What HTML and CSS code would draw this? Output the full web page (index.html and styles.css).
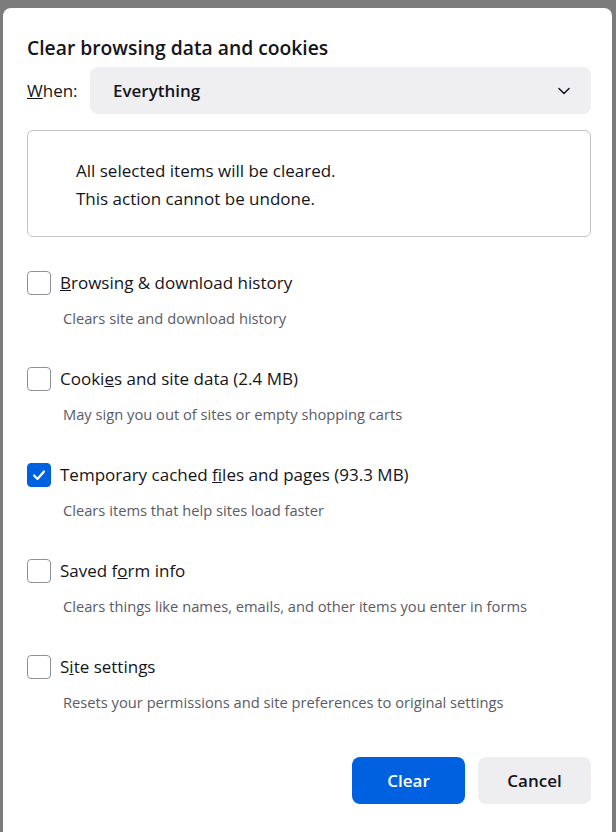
FILE: index.html
```html
<!DOCTYPE html>
<html lang="en">
<head>
  <meta charset="UTF-8" />
  <title>Clear browsing data and cookies</title>
  <link rel="stylesheet" href="styles.css">
</head>
<body>
  <div class="dialog">
    <h1 class="title">Clear browsing data and cookies</h1>

    <div class="when-row">
      <span class="when-label"><u>W</u>hen:</span>
      <div class="select">
        <span>Everything</span>
        <svg class="chevron" width="16" height="16" viewBox="0 0 16 16">
          <path d="M3 5.5 L8 10.5 L13 5.5" fill="none" stroke="#15141a" stroke-width="1.5" stroke-linecap="round" stroke-linejoin="round"/>
        </svg>
      </div>
    </div>

    <div class="notice">
      <p>All selected items will be cleared.</p>
      <p>This action cannot be undone.</p>
    </div>

    <ul class="options">
      <li class="option">
        <label><span class="box"></span><span><u>B</u>rowsing &amp; download history</span></label>
        <p class="desc">Clears site and download history</p>
      </li>
      <li class="option">
        <label><span class="box"></span><span>Cooki<u>e</u>s and site data (2.4 MB)</span></label>
        <p class="desc">May sign you out of sites or empty shopping carts</p>
      </li>
      <li class="option">
        <label><span class="box checked">
          <svg width="16" height="16" viewBox="0 0 16 16"><path d="M3 8.5 L6.5 12 L13 4.5" fill="none" stroke="#fff" stroke-width="2.2" stroke-linecap="round" stroke-linejoin="round"/></svg>
        </span><span>Temporary cached <u>f</u>iles and pages (93.3 MB)</span></label>
        <p class="desc">Clears items that help sites load faster</p>
      </li>
      <li class="option">
        <label><span class="box"></span><span>Saved f<u>o</u>rm info</span></label>
        <p class="desc">Clears things like names, emails, and other items you enter in forms</p>
      </li>
      <li class="option">
        <label><span class="box"></span><span>S<u>i</u>te settings</span></label>
        <p class="desc">Resets your permissions and site preferences to original settings</p>
      </li>
    </ul>

    <div class="buttons">
      <button class="btn primary">Clear</button>
      <button class="btn">Cancel</button>
    </div>
  </div>
</body>
</html>
```

FILE: styles.css
```css
:root {
  --text: #15141a;
  --muted: #5b5b66;
  --accent: #0061e0;
  --field: #efeff1;
  --border: #c4c4c8;
}
* { box-sizing: border-box; margin: 0; padding: 0; }
body {
  background: #7b7b7b;
  font-family: "Open Sans", "Noto Sans", sans-serif;
  color: var(--text);
  height: 832px;
  overflow: hidden;
}
.dialog {
  background: #fff;
  margin: 8px 4px 0 3px;
  height: 830px;
  border-radius: 8px 8px 0 0;
  padding: 27px 21px 0 24px;
}

/* cabecera */
.title {
  font-size: 19.3px;
  font-weight: 600;
  line-height: 26px;
}
.when-row {
  display: flex;
  align-items: center;
  margin-top: 6px;
}
.when-label {
  font-size: 17px;
  width: 63px;
}
.select {
  flex: 1;
  height: 47px;
  background: var(--field);
  border-radius: 8px;
  display: flex;
  align-items: center;
  justify-content: space-between;
  padding: 0 19px 0 23px;
  font-size: 17px;
  font-weight: 600;
}

/* aviso */
.notice {
  margin-top: 16px;
  border: 1px solid var(--border);
  border-radius: 6px;
  height: 107px;
  padding: 26px 48px;
  font-size: 17px;
  line-height: 28px;
}

/* opciones */
.options {
  list-style: none;
  margin-top: 34px;
}
.option {
  height: 96px;
}
.option label {
  display: flex;
  align-items: center;
  font-size: 17px;
  line-height: 24px;
}
.box {
  width: 24px;
  height: 24px;
  border: 1px solid #8f8f9d;
  border-radius: 4px;
  margin-right: 9px;
  display: flex;
  align-items: center;
  justify-content: center;
}
.box.checked {
  background: var(--accent);
  border-color: var(--accent);
}
.desc {
  font-size: 14.7px;
  color: var(--muted);
  margin: 13px 0 0 36px;
}

/* botones */
.buttons {
  display: flex;
  justify-content: flex-end;
  gap: 13px;
  margin-top: 6px;
}
.btn {
  width: 113px;
  height: 47px;
  border: none;
  border-radius: 8px;
  background: #eeeef0;
  color: var(--text);
  font-family: inherit;
  font-size: 17px;
  font-weight: 600;
}
.btn.primary {
  background: var(--accent);
  color: #fff;
}
```
